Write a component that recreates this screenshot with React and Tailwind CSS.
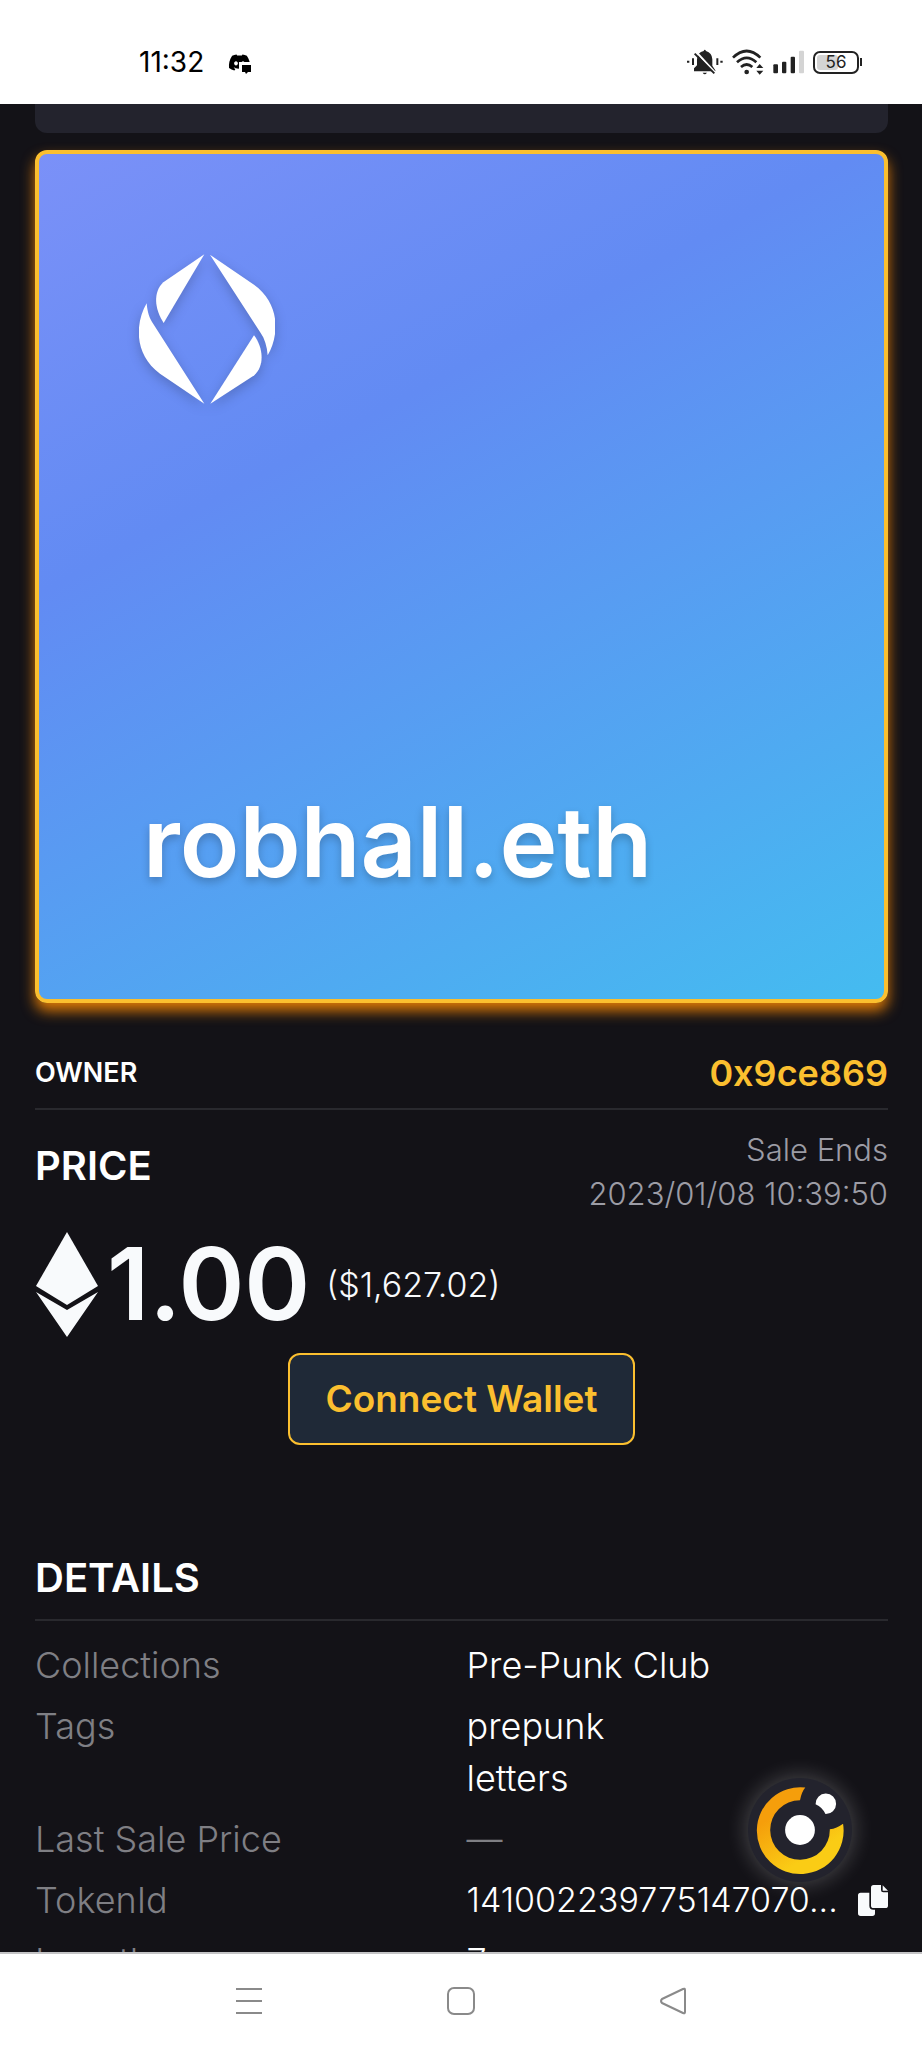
import { FaCopy, FaDiscord } from 'react-icons/fa6'

const DETAILS = [
  { label: 'Collections', values: ['Pre-Punk Club'] },
  { label: 'Tags', values: ['prepunk', 'letters'] },
  { label: 'Last Sale Price', values: [] },
  { label: 'TokenId', values: ['141002239775147070...'], copy: true },
  { label: 'Length', values: ['7'] },
]

export default function App() {
  return (
    <div className="flex h-screen flex-col overflow-hidden bg-[#131217] font-['Inter',sans-serif] text-white">
      <StatusBar />

      <main className="relative min-h-0 flex-1 overflow-hidden pr-[34px] pl-[35px]">
        <div className="h-[29px] rounded-b-xl bg-[#23232d]" />

        <NameCard name="robhall.eth" />

        <section className="mt-[35px] flex h-[72px] items-center justify-between border-b-2 border-[#29292e]">
          <h2 className="text-[27px] font-semibold">OWNER</h2>
          <a href="#owner" className="text-[36px] font-semibold text-[#fbbf2f]">
            0x9ce869
          </a>
        </section>

        <Price />
        <Details />
        <FloatingButton />
      </main>

      <NavBar />
    </div>
  )
}

function NameCard({ name }) {
  return (
    <div
      className="mt-[17px] flex aspect-square flex-col justify-between rounded-xl border-4 border-[#fbbf2f]
                 bg-[linear-gradient(151.8deg,#a099ff_-50%,#628bf3_34%,#44bcf0_100%)] bg-origin-border
                 px-[100px] pt-[100px] pb-[93px] shadow-[0_8px_14px_0_#d97706]"
    >
      <EnsLogo />
      <p className="pl-1 text-[98px] leading-[128px] font-semibold [text-shadow:0_4px_8px_rgba(0,0,0,0.22)]">
        {name}
      </p>
    </div>
  )
}

function Price() {
  return (
    <section>
      <div className="flex items-start justify-between pt-[18px]">
        <h2 className="text-[40px] leading-[76px] font-semibold">PRICE</h2>
        <p className="text-right text-[31px] leading-[44px] font-light text-[#9c9ca5]">
          Sale Ends
          <br />
          2023/01/08 10:39:50
        </p>
      </div>
      <div className="mt-2 flex h-[120px] items-center text-[#f8fafc]">
        <EthLogo />
        <span className="ml-2 text-[100px] leading-none font-semibold">1.00</span>
        <span className="ml-4 text-[34px] font-light">($1,627.02)</span>
      </div>
      <div className="mt-[9px] flex justify-center">
        <button
          type="button"
          className="h-[92px] rounded-xl border-2 border-[#fbbf2f] bg-[#1f2937] px-[35px] text-[37px] font-semibold text-[#fbbf2f]"
        >
          Connect Wallet
        </button>
      </div>
    </section>
  )
}

function Details() {
  return (
    <section className="mt-[103px]">
      <h2 className="h-[73px] border-b-2 border-[#29292e] text-[40px] leading-[60px] font-semibold">
        DETAILS
      </h2>
      <dl className="mt-[18px] flex flex-col gap-[9px] text-[36px] leading-[52px] font-light">
        {DETAILS.map(({ label, values, copy }) => (
          <div key={label} className="grid grid-cols-2 gap-[10px]">
            <dt className="text-[#7f7f84]">{label}</dt>
            <dd className="flex items-center justify-between">
              <div>
                {values.map((value) => (
                  <p key={value} className={copy ? 'text-[34px]' : undefined}>
                    {value}
                  </p>
                ))}
                {values.length === 0 && <p className="text-[#7f7f84]">—</p>}
              </div>
              {copy && (
                <button type="button" aria-label="Copy token id" className="text-[#f8fafc]">
                  <CopyIcon />
                </button>
              )}
            </dd>
          </div>
        ))}
      </dl>
    </section>
  )
}

function StatusBar() {
  return (
    <header className="flex h-[104px] shrink-0 items-center justify-between bg-white pt-5 pr-[60px] pl-[139px] text-black">
      <div className="flex items-center gap-6">
        <time className="text-[28px] leading-none">11:32</time>
        <DiscordIcon />
      </div>
      <div className="flex items-center gap-[9px]">
        <MutedBellIcon />
        <WifiIcon />
        <SignalIcon />
        <Battery level={56} />
      </div>
    </header>
  )
}

function NavBar() {
  return (
    <nav className="flex h-24 shrink-0 items-center justify-around border-t-2 border-[#c4c4c6] bg-white px-[143px] text-[#8a8a8a]">
      <button type="button" aria-label="Recent apps">
        <svg className="size-[28px]" viewBox="0 0 28 28" stroke="currentColor" strokeWidth="2">
          <path d="M1 2h26M1 14h26M1 26h26" />
        </svg>
      </button>
      <button type="button" aria-label="Home">
        <svg className="size-[28px]" viewBox="0 0 28 28" fill="none" stroke="currentColor" strokeWidth="2">
          <rect x="1" y="1" width="26" height="26" rx="6" />
        </svg>
      </button>
      <button type="button" aria-label="Back">
        <svg className="size-[28px]" viewBox="0 0 28 28" fill="none" stroke="currentColor" strokeWidth="2" strokeLinejoin="round">
          <path d="M24 2Q26 1 26 3V25Q26 27 24 26L3 16Q1 14 3 12Z" />
        </svg>
      </button>
    </nav>
  )
}

function FloatingButton() {
  return (
    <button
      type="button"
      aria-label="Open menu"
      className="absolute right-[70px] bottom-[70px] size-[104px] rounded-full bg-[#23232d] shadow-[0_0_20px_3px_rgba(255,255,255,0.2)]"
    >
      <svg className="size-[104px]" viewBox="0 0 314 314">
        <defs>
          <linearGradient id="ring" x1="0.2" y1="0.1" x2="0.7" y2="0.9">
            <stop offset="0.2" stopColor="#f59e0b" />
            <stop offset="0.85" stopColor="#facc15" />
          </linearGradient>
        </defs>
        <path
          d="M173 29A131 131 0 1 0 287 138Q268 152 247 155A90 90 0 1 1 157 67Q162 42 173 29Z"
          fill="url(#ring)"
        />
        <circle cx="157" cy="157" r="45" fill="#fff" />
        <path d="M204 79A31 31 0 1 1 234 109Q225 88 204 79Z" fill="#fff" />
      </svg>
    </button>
  )
}

function EnsLogo() {
  return (
    <svg
      className="h-[150px] w-[136px] drop-shadow-[0_4px_6px_rgba(0,0,0,0.2)]"
      viewBox="117 103 406 450"
      fill="#fff"
      aria-hidden="true"
    >
      <path d="M312 104L190 310C163 270 157 218 189 188Z" />
      <path d="M139 251C141 277 147 296 159 313L312 552L179 462C102 406 103 313 139 251Z" />
      <path d="M330 552L461 347C486 379 496 435 462 467Z" />
      <path d="M502 407C500 380 493 357 481 340L329 105L461 195C539 251 538 345 502 407Z" />
    </svg>
  )
}

function EthLogo() {
  return (
    <svg className="h-[105px] w-[64px]" viewBox="0 0 64 105" fill="currentColor" aria-label="ETH">
      <path d="M32 0L63 54L32 73L1 54Z" />
      <path d="M1 60L32 78L63 60L32 105Z" />
    </svg>
  )
}

function CopyIcon() {
  return (
    <svg className="h-[31px] w-[30px]" viewBox="0 0 90 93" fill="currentColor">
      <path d="M8 23H34V62Q34 74 46 74H51V85Q51 93 43 93H8Q0 93 0 85V31Q0 23 8 23Z" />
      <path d="M47 0H69V15Q69 22 76 22H90V62Q90 69 82 69H47Q39 69 39 62V8Q39 0 47 0Z" />
      <path d="M74 1L90 17H74Z" />
    </svg>
  )
}

function DiscordIcon() {
  return (
    <span className="relative block size-[23px]">
      <FaDiscord className="size-[23px]" />
      <svg className="absolute right-0 bottom-0 size-[12px]" viewBox="0 0 12 12">
        <path d="M0 0H12V12H0Z" fill="#fff" />
        <path d="M3 3H12V10H9L7 12L6 10H3Z" />
      </svg>
    </span>
  )
}

function MutedBellIcon() {
  return (
    <svg className="h-[26px] w-[36px]" viewBox="138 85 108 78" fill="#222">
      <path d="M188 91Q191 84 195 91Q213 96 214 116V135L223 149V152H159V143L168 134V116Q169 95 188 91Z" />
      <path d="M185 156H198Q191 165 185 156Z" />
      <path d="M163 91L231 165" stroke="#fff" strokeWidth="6" />
      <path d="M161 99L220 158" stroke="#222" strokeWidth="6" />
      <path d="M138 120h7v6h-7ZM153 113h6v20h-6ZM226 113h6v20h-6ZM238 120h7v6h-7Z" />
    </svg>
  )
}

function WifiIcon() {
  return (
    <svg className="h-[26px] w-[32px]" viewBox="275 82 96 78" fill="none" stroke="#222" strokeWidth="8">
      <path d="M278 108Q319 68 360 108M290 122Q319 95 348 122M302 136Q319 121 336 136" />
      <circle cx="319" cy="151" r="7" fill="#222" stroke="none" />
      <path d="M348 139L358 127L369 139ZM348 147L358 159L369 147Z" fill="#222" stroke="none" />
    </svg>
  )
}

function SignalIcon() {
  return (
    <svg className="h-[24px] w-[31px]" viewBox="393 87 93 72" fill="#222">
      <rect x="394" y="130" width="14" height="27" rx="3" />
      <rect x="420" y="122" width="13" height="35" rx="3" />
      <rect x="446" y="107" width="13" height="50" rx="3" />
      <rect x="471" y="89" width="15" height="68" rx="3" fill="#d4d4d4" />
    </svg>
  )
}

function Battery({ level }) {
  return (
    <div className="flex items-center gap-px">
      <div className="relative h-[23px] w-[46px] rounded-[7px] border-2 border-[#222] p-[2px]">
        <div className="h-full rounded-[3px] bg-[#d4d4d4]" style={{ width: `${level}%` }} />
        <span className="absolute inset-0 flex items-center justify-center text-[17px] leading-none text-[#222]">
          {level}
        </span>
      </div>
      <div className="h-[8px] w-[2px] bg-[#222]" />
    </div>
  )
}
